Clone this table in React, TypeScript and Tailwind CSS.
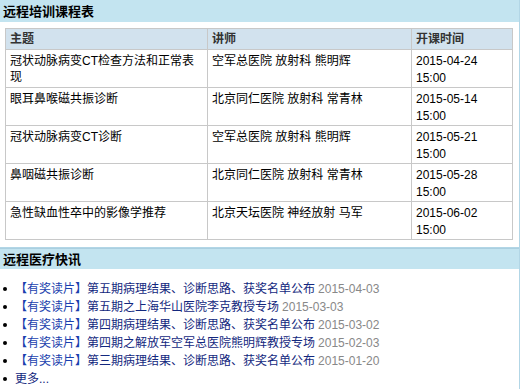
import React from "react";

const rows = [
  { t: "冠状动脉病变CT检查方法和正常表现", l: "空军总医院 放射科 熊明辉", d: "2015-04-24", h: "15:00" },
  { t: "眼耳鼻喉磁共振诊断", l: "北京同仁医院 放射科 常青林", d: "2015-05-14", h: "15:00" },
  { t: "冠状动脉病变CT诊断", l: "空军总医院 放射科 熊明辉", d: "2015-05-21", h: "15:00" },
  { t: "鼻咽磁共振诊断", l: "北京同仁医院 放射科 常青林", d: "2015-05-28", h: "15:00" },
  { t: "急性缺血性卒中的影像学推荐", l: "北京天坛医院 神经放射 马军", d: "2015-06-02", h: "15:00" },
];

const news = [
  { t: "第五期病理结果、诊断思路、获奖名单公布", d: "2015-04-03" },
  { t: "第五期之上海华山医院李克教授专场", d: "2015-03-03" },
  { t: "第四期病理结果、诊断思路、获奖名单公布", d: "2015-03-02" },
  { t: "第四期之解放军空军总医院熊明辉教授专场", d: "2015-02-03" },
  { t: "第三期病理结果、诊断思路、获奖名单公布", d: "2015-01-20" },
];

export default function App() {
  return (
    <div
      className="w-[520px] h-[389px] overflow-hidden bg-white text-[12px] text-black"
      style={{ fontFamily: '"Liberation Sans", Arial, "Noto Sans CJK SC", sans-serif' }}
    >
      <div className="border-r border-b border-[#b2d6e6] pb-[7px]">
        <div className="h-[22px] bg-[#c3e4f0] pl-[3px] flex items-center text-[13px] font-bold leading-none">
          远程培训课程表
        </div>
        <table className="ml-[5px] mt-[6px] w-[507px] border-collapse table-fixed">
          <colgroup>
            <col className="w-[202px]" />
            <col className="w-[204px]" />
            <col className="w-[101px]" />
          </colgroup>
          <thead>
            <tr className="h-[21px] bg-[#d2e2ee]">
              {["主题", "讲师", "开课时间"].map((h) => (
                <th key={h} className="border border-[#c8c8c8] px-[4px] text-left align-middle font-bold text-[#333] leading-[16px]">
                  {h}
                </th>
              ))}
            </tr>
          </thead>
          <tbody>
            {rows.map((r, i) => (
              <tr key={i} className="h-[37px]">
                <td className="border border-[#c8c8c8] px-[4px] pt-[3px] pb-0 align-top leading-[16px]">{r.t}</td>
                <td className="border border-[#c8c8c8] px-[4px] pt-[3px] pb-0 align-top leading-[16px]">{r.l}</td>
                <td className="border border-[#c8c8c8] px-[4px] pt-[3px] pb-0 align-top leading-[17px]">
                  {r.d}
                  <br />
                  {r.h}
                </td>
              </tr>
            ))}
          </tbody>
        </table>
      </div>
      <div className="border-r border-[#b2d6e6] h-[146px]">
        <div className="h-[21px] bg-[#c3e4f0] border-t border-[#aacfe0] pl-[3px] flex items-center text-[13px] font-bold leading-none">
          远程医疗快讯
        </div>
        <ul className="mt-[11px]">
          {news.map((n, i) => (
            <li key={i} className="flex items-center h-[18px] leading-[18px]">
              <span className="w-[4px] h-[4px] rounded-full bg-black ml-[3px] mr-[8px]" />
              <span className="text-[#1a3fae]">【有奖读片】</span>
              <span className="text-[#13287e]">{n.t}</span>
              <span className="text-[#888] ml-[3px]">{n.d}</span>
            </li>
          ))}
          <li className="flex items-center h-[18px] leading-[18px]">
            <span className="w-[4px] h-[4px] rounded-full bg-black ml-[3px] mr-[8px]" />
            <span className="text-[#13287e]">更多...</span>
          </li>
        </ul>
      </div>
    </div>
  );
}
